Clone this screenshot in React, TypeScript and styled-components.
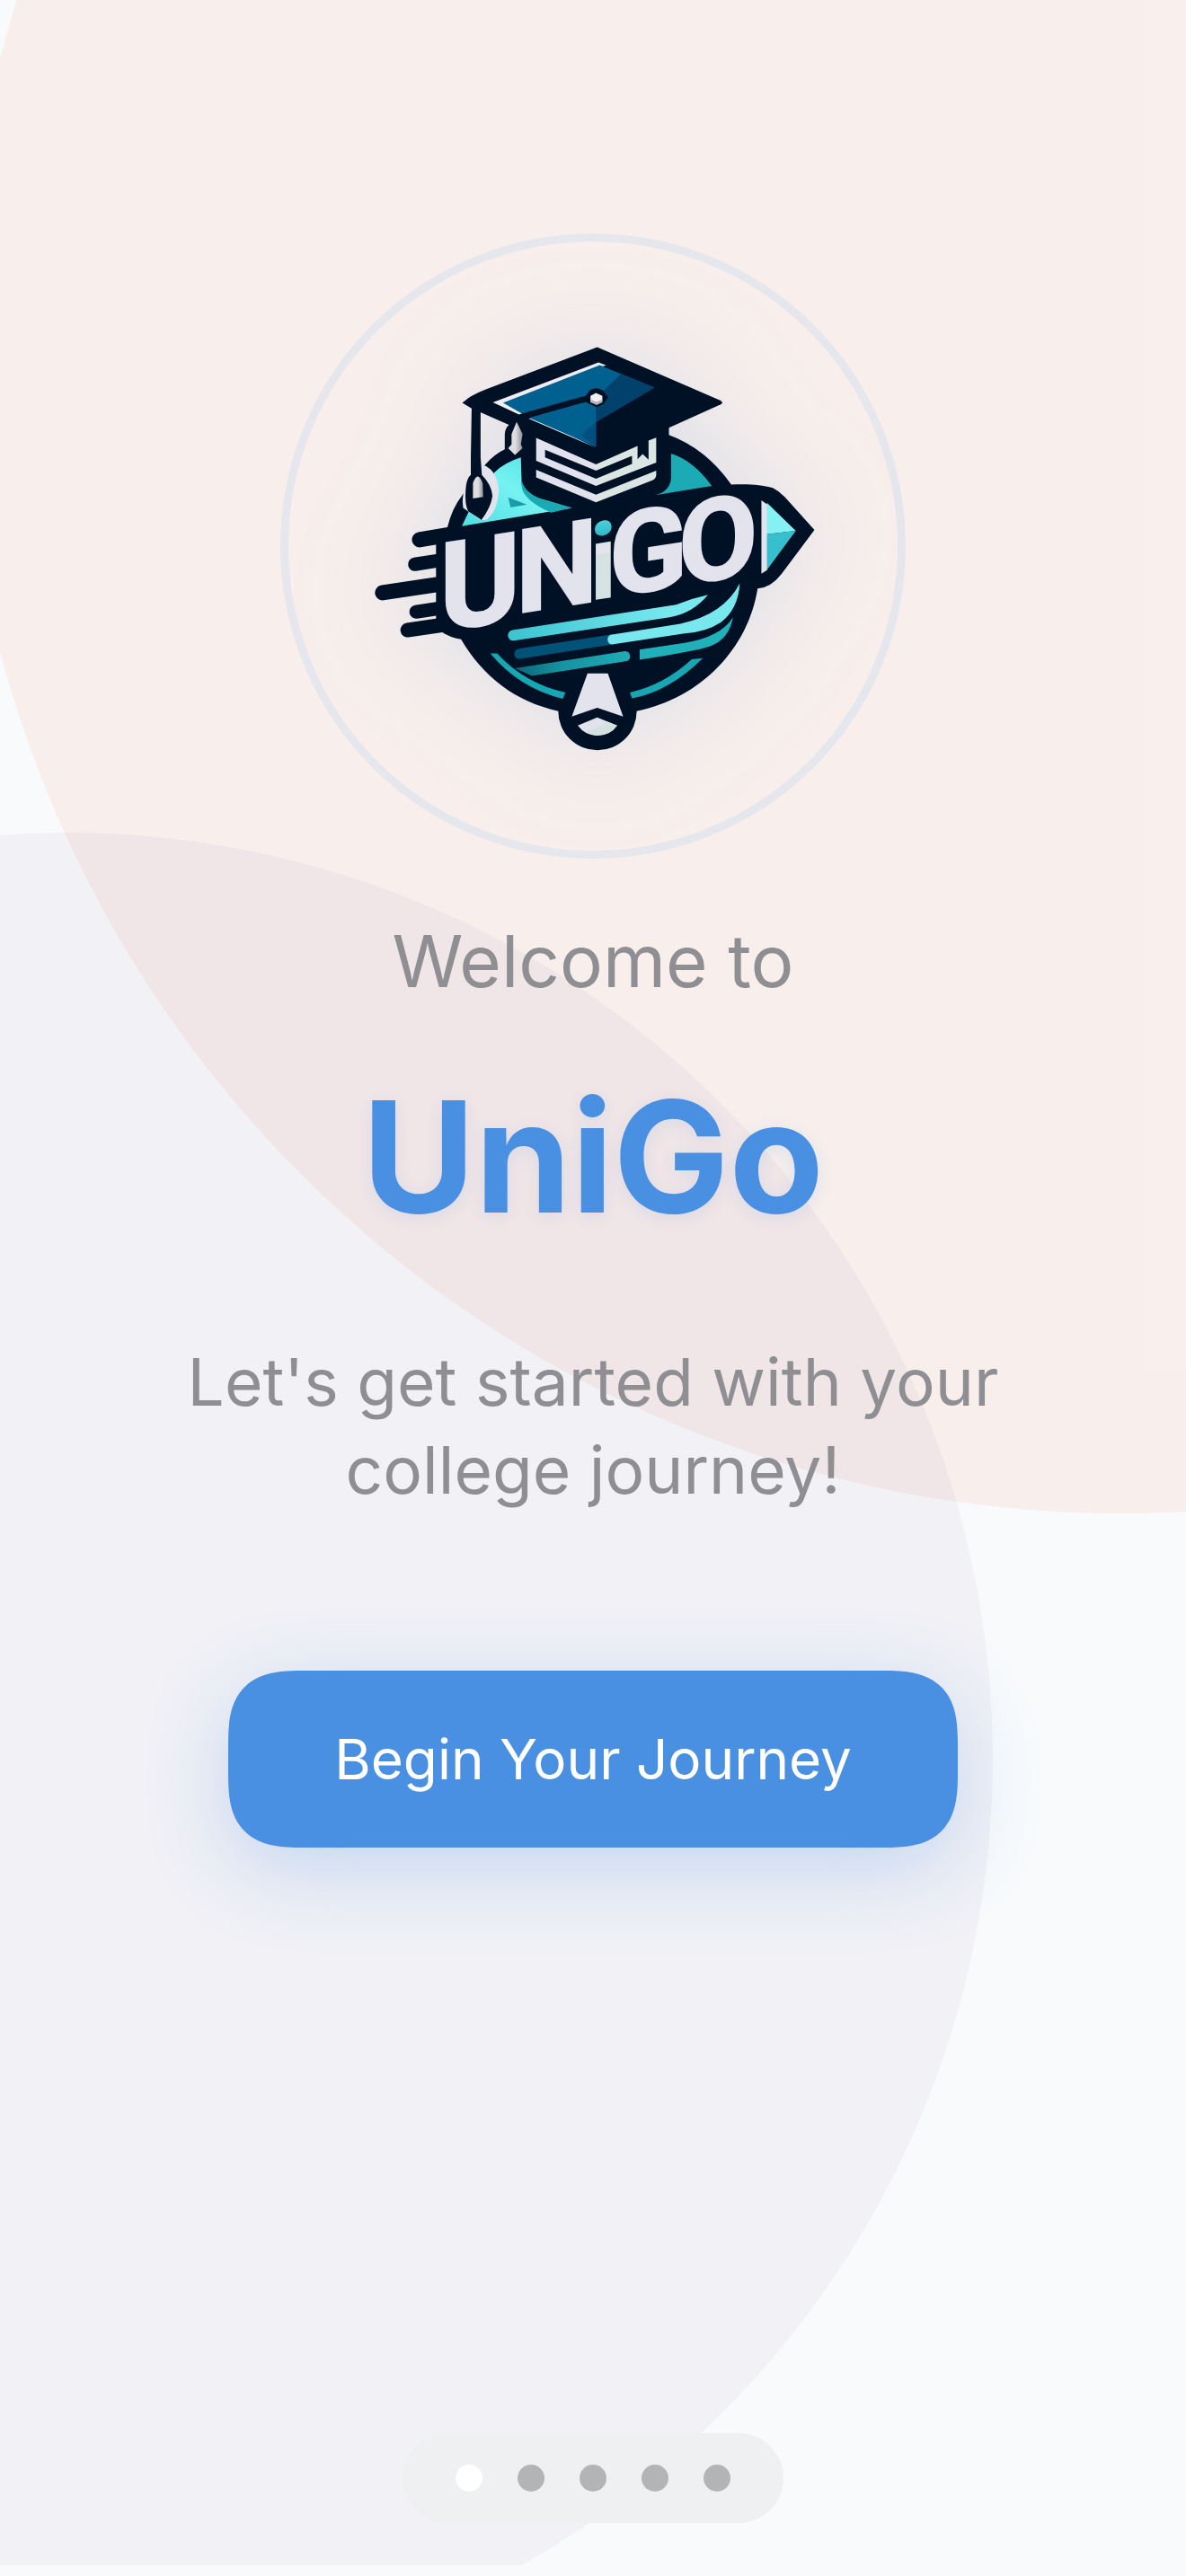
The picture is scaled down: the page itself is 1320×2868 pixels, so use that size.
import React, { useState } from "react";
import styled, { createGlobalStyle } from "styled-components";

const GlobalStyle = createGlobalStyle`
  * { box-sizing: border-box; }
  body {
    margin: 0;
    background: #f8fafc;
    font-family: Inter, "Liberation Sans", sans-serif;
  }
`;

const Screen = styled.div`
  position: relative;
  display: flex;
  flex-direction: column;
  min-height: 100vh;
  overflow: hidden;
`;

const Backdrop = styled.div`
  position: absolute;
  inset: 0 0 12px;
  overflow: hidden;
  pointer-events: none;
`;

const Bubble = styled.div<{ $size: number; $x: number; $y: number; $color: string }>`
  position: absolute;
  left: ${(p) => p.$x}px;
  top: ${(p) => p.$y}px;
  width: ${(p) => p.$size}px;
  height: ${(p) => p.$size}px;
  border-radius: 50%;
  background: ${(p) => p.$color};
`;

const Content = styled.main`
  position: relative;
  flex: 1;
  display: flex;
  flex-direction: column;
  align-items: center;
  padding: 260px 60px 60px;
  text-align: center;
`;

const LogoRing = styled.div`
  width: 696px;
  height: 696px;
  border: 9px solid #e6e6ed;
  border-radius: 50%;
`;

const LogoArt = styled.svg`
  display: block;
  width: 100%;
  height: 100%;
  overflow: visible;
  filter: drop-shadow(0 0 60px rgba(80, 140, 220, 0.17));
`;

const Greeting = styled.p`
  margin: 64px 0 0;
  font-size: 80px;
  line-height: 100px;
  color: #8e8e93;
`;

const Title = styled.h1`
  margin: 62px 0 0;
  font-size: 172px;
  line-height: 210px;
  font-weight: 700;
  color: #4a90e2;
  text-shadow: 0 4px 20px rgba(74, 144, 226, 0.14);
`;

const Tagline = styled.p`
  max-width: 960px;
  margin: 98px 0 0;
  font-size: 73px;
  line-height: 98px;
  color: #8e8e93;
`;

const StartButton = styled.button`
  margin-top: 174px;
  width: 812px;
  height: 197px;
  border: 0;
  border-radius: 66px;
  background: #4a90e2;
  color: #fff;
  font: 400 62px/80px Inter, "Liberation Sans", sans-serif;
  cursor: pointer;
  box-shadow: 0 24px 90px rgba(74, 144, 226, 0.27);
  @supports (corner-shape: squircle) {
    border-radius: 84px;
    corner-shape: superellipse(1.5);
  }
`;

const Pager = styled.nav`
  position: relative;
  align-self: center;
  display: flex;
  gap: 39px;
  margin-bottom: 59px;
  padding: 35px 59px;
  border-radius: 50px;
  background: #eff0f1;
`;

const Dot = styled.button<{ $active: boolean }>`
  width: 30px;
  height: 30px;
  padding: 0;
  border: 0;
  border-radius: 50%;
  background: ${(p) => (p.$active ? "#ffffff" : "#b3b4b5")};
  cursor: pointer;
`;

const INK = "#001126";
const PAPER = "#e3e3ed";

function UniGoLogo() {
  return (
    <LogoArt viewBox="66 62 1436 1436" role="img" aria-label="UniGo logo">
      <defs>
        <linearGradient id="stripe" x1="0" x2="1">
          <stop offset="0" stopColor="#3ac3d1" />
          <stop offset="0.8" stopColor="#78e8ee" />
        </linearGradient>
        <linearGradient id="stripeLow" x1="0" x2="1">
          <stop offset="0" stopColor="#0c6576" />
          <stop offset="0.4" stopColor="#1593a0" />
          <stop offset="1" stopColor="#1fabb6" />
        </linearGradient>
        <linearGradient id="globe" x1="0" x2="1" y1="1" y2="0">
          <stop offset="0" stopColor="#4fdfe2" />
          <stop offset="0.5" stopColor="#76f2f1" />
          <stop offset="1" stopColor="#4bdcdf" />
        </linearGradient>
        <linearGradient id="letterI" gradientUnits="userSpaceOnUse" x1="0" x2="0" y1="820" y2="1032">
          <stop offset="0" stopColor="#5fe3e6" />
          <stop offset="0.3" stopColor="#2fb9c6" />
          <stop offset="0.3" stopColor={PAPER} />
          <stop offset="0.5" stopColor={PAPER} />
          <stop offset="0.5" stopColor="#d6e1e1" />
        </linearGradient>
        <linearGradient id="page" x1="0" x2="1">
          <stop offset="0.5" stopColor="#e2e2ee" />
          <stop offset="0.5" stopColor="#dbe5e3" />
        </linearGradient>
        <linearGradient id="silver" x1="0" x2="1">
          <stop offset="0.5" stopColor="#dedee2" />
          <stop offset="1" stopColor="#8d9096" />
        </linearGradient>
      </defs>

      {/* speed lines */}
      <g stroke={INK} strokeLinecap="round" fill="none">
        <path d="M375 765 L450 752" strokeWidth="36" />
        <path d="M364 823 L440 811" strokeWidth="32" />
        <path d="M288 890 L440 867" strokeWidth="36" />
        <path d="M367 935 L440 924" strokeWidth="32" />
        <path d="M347 978 L470 960" strokeWidth="34" />
      </g>

      {/* globe, banner and pencil silhouette */}
      <path
        fill={INK}
        d="M440 738 Q452 690 476 660 L530 588 Q552 563 576 552 V515 Q578 500 586 494 L650 470 H963 V518 Q1050 550 1110 635 C1150 633 1180 635 1208 643 Q1222 650 1236 664 L1306 742 L1228 846 Q1203 878 1172 880 C1150 1020 1040 1138 887 1169 A92 92 0 1 1 702 1169 C600 1147 525 1088 473 1000 Q445 995 428 983 L414 960 V742 Z"
      />
      <path fill="url(#globe)" d="M475 733 L491 699 L551 607 Q575 583 614 571 L616 636 Q625 655 657 667 L734 690 Z" />
      <path fill="#1ba9b3" d="M616 625 Q622 652 657 667 L734 690 L685 701 Q620 672 616 640 Z" />
      <path fill="#1b9ba8" d="M584 665 L628 682 L590 689 Z" />
      <path fill="#1caab4" d="M968 562 Q1020 578 1064 638 L931 660 Q966 650 968 620 Z" />

      {/* cap board */}
      <path
        fill={INK}
        d="M476 442 L490 431 Q505 421 530 411 L794 311 L1085 437 Q1092 442 1085 446 L963 501 L794 575 L617 508 L497 455 Z"
      />
      <path fill="#eeeef2" d="M548 441 L797 347 L815 354 L800 358 L574 442 L628 466 L614 472 Z M632 479 L650 480 L791 548 Z" />
      <path fill="#00608f" d="M572 442 L800 353 L850 374 L929 406 L791 487 V546 L637 479 Z" />
      <path fill="#00426b" d="M850 374 L929 406 L791 487 V431 Z" />
      <path fill="#004f7e" d="M791 487 V546 L756 519 Z" />
      <path d="M612 476 L740 440 L778 430" fill="none" stroke={INK} strokeWidth="14" />
      <path fill={INK} d="M762 432 L777 412 Q792 404 806 412 L820 429 L808 446 L792 452 L770 442 Z" />
      <path fill="#f0f0f4" d="M778 426 L791 419 L806 426 V438 L793 447 L778 440 Z" />
      <path fill="#b0b3b8" d="M778 434 L792 440 L806 434 V441 L793 447 L778 441 Z" />

      {/* book pages under the cap */}
      <path
        fill="url(#page)"
        d="M650 525 L791 587 L889 544 V575 L901 563 L915 576 V531 L933 524 V583 L791 638 L650 579 Z"
      />
      <path fill={INK} d="M671 553 L791 602 L876 567 V586 L791 621 L671 571 Z" />
      <path fill="url(#page)" d="M650 600 L791 659 L933 602 V613 Q932 621 924 625 L791 677 L650 618 Z" />

      {/* tassels */}
      <path fill="url(#silver)" d="M604 487 L618 516 L614 540 L618 549 L600 565 L584 549 L592 540 V516 Z" />
      <path fill={PAPER} d="M524 588 Q560 602 562 652 Q556 706 530 719 L515 716 L478 690 Q474 668 482 640 Z" />
      <path
        fill={INK}
        d="M498 452 H519 V570 L522 612 Q545 635 547 662 Q543 690 521 718 L490 698 Q480 680 485 636 Q488 618 496 612 V570 Z"
      />
      <path fill="url(#silver)" d="M501 668 V632 Q512 600 524 632 L525 664 Z" />

      {/* wordmark */}
      <g
        transform="skewY(-9)"
        fontFamily="Roboto, 'Liberation Sans', sans-serif"
        fontWeight="700"
        fill={PAPER}
        stroke={PAPER}
        strokeWidth="4"
      >
        <text fontSize="290">
          <tspan x="422" y="1048">U</tspan>
        </text>
        <text fontSize="274">
          <tspan x="602" y="1034">N</tspan>
        </text>
        <text fontSize="250" fill="url(#letterI)" stroke="none">
          <tspan x="775" y="1032">i</tspan>
        </text>
        <text fontSize="270">
          <tspan x="822" y="1030">G</tspan>
          <tspan x="986" y="1029">O</tspan>
        </text>
      </g>

      {/* pencil tip */}
      <path fill={PAPER} d="M1181 672 L1195 682 V836 L1181 845 Z" />
      <path fill="#86f1f2" d="M1194 678 L1262 744 L1194 752 Z" />
      <path fill="#37bfcd" d="M1194 752 L1262 744 L1194 836 Z" />

      {/* globe stripes */}
      <path fill="url(#stripe)" d="M594 978 L980 918 Q1015 904 1055 895 Q1020 938 965 948 L598 1003 A12 12 0 0 1 594 978 Z" />
      <path fill="#005279" d="M609 1022 L830 988 V1012 L612 1046 A12 12 0 0 1 609 1022 Z" />
      <path fill="#78e8ee" d="M826 989 L990 963 Q1092 942 1130 868 Q1126 930 1085 960 Q1050 983 1000 986 L829 1012 A12 12 0 0 1 826 989 Z" />
      <path fill="url(#stripeLow)" d="M600 1068 L860 1028 A12 12 0 0 1 864 1051 L640 1086 Z" />
      <path fill="#20b0ba" d="M894 1024 L1000 1008 Q1085 995 1114 948 Q1105 1000 1060 1016 Q1030 1027 894 1048 Z" />
      <path fill="#17a7b2" d="M542 1033 H558 Q625 1105 719 1125 L713 1140 Q610 1115 542 1033 Z" />
      <path fill="#17a7b2" d="M871 1125 Q950 1108 1017 1047 L1043 1044 Q965 1122 876 1139 Z" />

      {/* diploma */}
      <path fill={PAPER} d="M771 1080 H819 L855 1182 L794 1161 L734 1182 Z" />
      <path fill={PAPER} d="M748 1203 L794 1184 L841 1203 Q825 1226 794 1227 Q765 1226 748 1203 Z" />
      <path fill="#d5e0e0" d="M765 1216 Q800 1212 815 1193 L841 1203 Q825 1226 794 1227 Q778 1226 765 1216 Z" />
    </LogoArt>
  );
}

const PAGES = ["Welcome", "Page 2", "Page 3", "Page 4", "Page 5"];

export default function App() {
  const [page, setPage] = useState(0);
  return (
    <Screen>
      <GlobalStyle />
      <Backdrop>
        <Bubble $size={2580} $x={-43} $y={-895} $color="rgba(255, 145, 98, 0.1)" />
        <Bubble $size={2062} $x={-957} $y={927} $color="rgba(118, 74, 140, 0.05)" />
      </Backdrop>
      <Content>
        <LogoRing>
          <UniGoLogo />
        </LogoRing>
        <Greeting>Welcome to</Greeting>
        <Title>UniGo</Title>
        <Tagline>Let's get started with your college journey!</Tagline>
        <StartButton type="button" onClick={() => setPage(1)}>
          Begin Your Journey
        </StartButton>
      </Content>
      <Pager aria-label="Onboarding pages">
        {PAGES.map((label, i) => (
          <Dot key={label} type="button" aria-label={label} $active={i === page} onClick={() => setPage(i)} />
        ))}
      </Pager>
    </Screen>
  );
}
